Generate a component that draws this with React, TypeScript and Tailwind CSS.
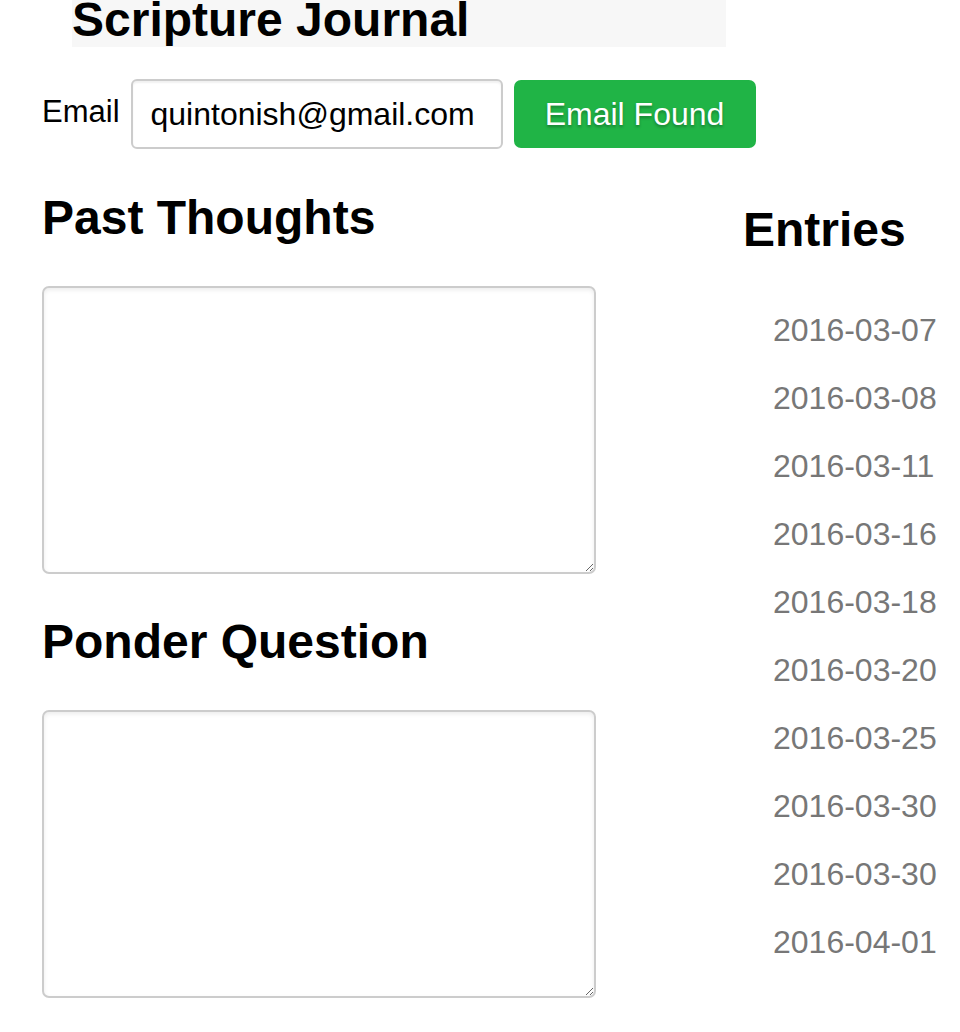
const entries = [
  "2016-03-07", "2016-03-08", "2016-03-11", "2016-03-16", "2016-03-18",
  "2016-03-20", "2016-03-25", "2016-03-30", "2016-03-30", "2016-04-01",
]

export default function App() {
  return (
    <div className="min-h-screen bg-white px-[42px] text-black" style={{ fontFamily: '"Liberation Sans", Arial, sans-serif' }}>
      {/* --- Title bar --- */}
      <div className="ml-[30px] h-[47px] w-[654px] overflow-hidden bg-[#f7f7f7]">
        <h1 className="text-[48px] font-bold leading-[40px]">Scripture Journal</h1>
      </div>

      {/* --- Email row --- */}
      <div className="mt-[32px] flex items-center gap-[11px]">
        <label className="mb-[6px] text-[31px] leading-none">Email</label>
        <input
          defaultValue="quintonish@gmail.com"
          className="h-[70px] w-[372px] rounded-[6px] border-2 border-[#cccccc] bg-white pl-[18px] text-[32px] text-black outline-none shadow-[inset_0_2px_2px_rgba(0,0,0,0.06)]"
        />
        <button className="h-[68px] w-[242px] rounded-[7px] bg-[#20b446] text-[32px] text-white [text-shadow:0_2px_3px_rgba(0,0,0,0.3)]">
          Email Found
        </button>
      </div>

      <div className="mt-[45px] flex">
        {/* --- Left: journal fields --- */}
        <div className="flex w-[554px] shrink-0 flex-col">
          <h2 className="text-[48px] font-bold leading-[48px]">Past Thoughts</h2>
          <textarea className="mt-[44px] h-[288px] w-full rounded-[7px] border-2 border-[#cccccc] bg-white shadow-[inset_0_2px_4px_rgba(0,0,0,0.08)] outline-none" />
          <h2 className="mt-[44px] text-[48px] font-bold leading-[48px]">Ponder Question</h2>
          <textarea className="mt-[44px] h-[288px] w-full rounded-[7px] border-2 border-[#cccccc] bg-white shadow-[inset_0_2px_4px_rgba(0,0,0,0.08)] outline-none" />
        </div>

        {/* --- Right: entries list --- */}
        <div className="ml-[147px] flex shrink-0 flex-col whitespace-nowrap">
          <h2 className="mt-[12px] text-[48px] font-bold leading-[48px]">Entries</h2>
          <ul className="mt-[42px] pl-[30px]">
            {entries.map((d, i) => (
              <li key={i} className="h-[68px] text-[32px] leading-[68px] text-[#777777]">{d}</li>
            ))}
          </ul>
        </div>
      </div>
    </div>
  )
}
